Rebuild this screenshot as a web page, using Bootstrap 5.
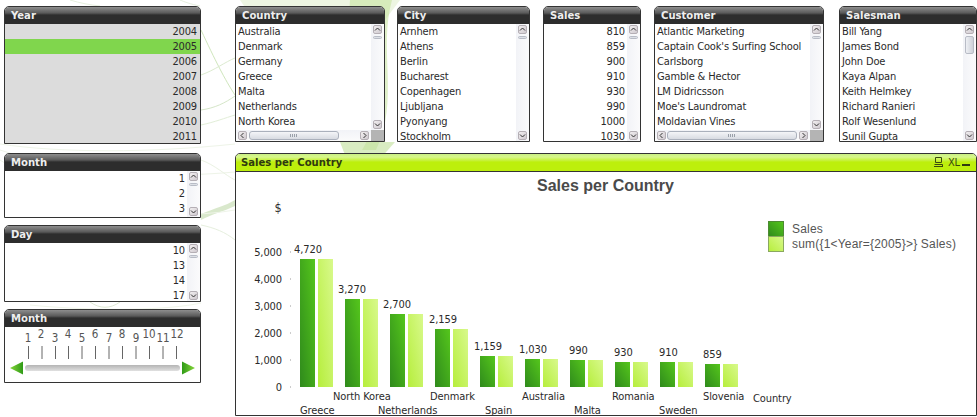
<!DOCTYPE html>
<html lang="en">
<head>
<meta charset="utf-8">
<title>Sales dashboard</title>
<link href="https://cdn.jsdelivr.net/npm/bootstrap@5.3.0/dist/css/bootstrap.min.css" rel="stylesheet">
<style>
html,body{margin:0;background:#fff;overflow:hidden}
body{width:977px;height:417px;font:11px/15px "DejaVu Sans Condensed","DejaVu Sans",sans-serif;letter-spacing:-.15px;color:#2a2a2a}
.sheet{width:977px;height:417px;padding:6px 0 0 4px;position:relative;overflow:hidden}
.swoosh{position:absolute;left:0;top:0;z-index:0}
.colleft{width:197px;position:relative;z-index:1}
.colright{width:742px;margin-left:34px;position:relative;z-index:1}
.win{border:1px solid #333;border-radius:5px 5px 0 0;background:#fff;overflow:hidden;flex:none}
.cap{height:17px;margin:0;font:bold 11.2px/18px "DejaVu Sans Condensed","DejaVu Sans",sans-serif;color:#eee;padding-left:6px;letter-spacing:0;
background:linear-gradient(#8e8e8e 0,#5a5a5a 6px,#444 7px,#2d2d2d 8px,#2d2d2d 100%)}
.cap-green{color:#2f3a10;padding-left:5px;background:linear-gradient(#c9ef84 0,#d7f78a 3px,#c3f02e 7px,#bdef0c 8px,#bdef0c 100%);border-bottom:1px solid #333;height:18px;display:flex;justify-content:space-between}
.capicons{display:block;margin-top:2px;font-weight:400}
.body-list{display:flex}
.rows{flex:1 1 auto;min-width:0;overflow:hidden}
.rowi{height:15px;white-space:nowrap;padding-left:2px}
.rowr{text-align:right;padding:0 2px 0 0}
.gray{background:#dcdcdc}
.gray .rowi{padding-right:3px}
.pick{background:#80d64d}
.vbar{width:13px;flex:none;background:linear-gradient(90deg,#f2f3f7,#fbfbfc);position:relative}
.btn-sb{position:absolute;width:9px;height:9px;background:linear-gradient(135deg,#f2eff0,#cfc9cf);border:1px solid #b5afb5;border-radius:2px;display:block}
.btn-sb svg{display:block}
.up{left:2px;top:1px}
.dn{left:2px;bottom:1px}
.thumb{position:absolute;left:2px;top:12px;width:9px;height:3px;border:1px solid #b8bcc6;border-radius:2px;background:#dde0e6}
.thumb-tall{height:18px;background:linear-gradient(90deg,#eef0f4,#cdd0d8)}
.hbar{height:11px;display:flex;background:linear-gradient(#f2f3f7,#fbfbfc);position:relative}
.hzone{flex:1;position:relative}
.corner{width:13px;background:#b4b4b4;flex:none}
.hl{left:2px;top:1px}
.hr{right:2px;top:1px}
.hthumb{position:absolute;left:13px;right:32px;top:1px;height:9px;border:1px solid #aab0bc;border-radius:3px;background:linear-gradient(#f4f5f8,#d8dbe2)}
.hthumb-wide{left:12px;right:13px}
.hthumb::after{content:"";position:absolute;left:50%;top:2px;margin-left:-4px;width:8px;height:3px;background:repeating-linear-gradient(90deg,#9aa0aa 0 1px,transparent 1px 2px)}
.h-year{height:138px}.h-m{height:65px}.h-d{height:77px}.h-s{height:74px}
.gap9{margin-bottom:9px}.gap7{margin-bottom:7px}
.toprow{height:136px;margin-bottom:11px}
.w150{width:150px}.w133{width:133px;margin-left:12px}.w98{width:98px;margin-left:13px}.w170{width:170px;margin-left:13px}.w138{width:138px;margin-left:15px}
.chartwin{width:742px;height:263px}
.blockfig{display:block}
.sl{font:11.5px "DejaVu Sans Condensed","DejaVu Sans",sans-serif;fill:#555;letter-spacing:0}
.axis{font:11px "DejaVu Sans Condensed","DejaVu Sans",sans-serif;fill:#2a2a2a;letter-spacing:-.1px}
.dollar{font:12.5px "DejaVu Sans Condensed","DejaVu Sans",sans-serif;fill:#2a2a2a}
.xltxt{font:400 11px "DejaVu Sans Condensed",sans-serif;fill:#3a4a10;letter-spacing:-.2px}
.ttl{font:bold 16px "Liberation Sans",Arial,sans-serif;fill:#4a4a4a;letter-spacing:0}
.leg{font:12px "Liberation Sans",Arial,sans-serif;fill:#555;letter-spacing:.2px}
</style>
</head>
<body>
<div class="sheet d-flex">
<svg class="swoosh" width="977" height="417" viewBox="0 0 977 417" fill="none" aria-hidden="true">
<path d="M240 0C262 35 300 60 385 20L400 0Z" fill="#dfeccb" opacity=".55"/>
<path d="M350 0C345 60 385 120 362 150L376 150C400 100 378 50 392 0Z" fill="#c4e29b" opacity=".55"/>
<path d="M340 142L395 142L372 168L350 168Z" fill="#bfe09a" opacity=".6"/>
<path d="M201 30C215 60 225 80 235 95" stroke="#cfe6bc"/>
<path d="M201 75C215 70 225 62 235 58" stroke="#dcebd0"/>
<path d="M201 110C215 108 225 103 235 96" stroke="#d5e6c8"/>
<path d="M201 125C215 122 225 118 235 115" stroke="#e2eed8"/>
<path d="M201 214C215 208 225 206 235 200L235 206C222 212 212 214 201 220Z" fill="#cfe2bf" opacity=".8"/>
<path d="M0 160C60 200 150 225 235 210" stroke="#eef4e8"/>
<path d="M0 150C60 170 150 180 235 172" stroke="#eef4e8"/>
<path d="M201 225C215 228 225 232 235 240" stroke="#e6efde"/>
<path d="M201 160C215 165 225 175 235 180" stroke="#eaf2e2"/>
<path d="M90 302C100 309 110 309 120 302" stroke="#dfe9d4"/>
<path d="M30 305C100 312 170 310 201 303" stroke="#f0f5e9"/>
<path d="M0 144C60 153 150 153 235 144" stroke="#eef4e8"/>
<path d="M70 0C80 3 90 5 100 6M180 0C185 2 190 4 200 6" stroke="#e6efde"/>
</svg>

<div class="colleft">
  <section class="win h-year gap9">
    <h2 class="cap">Year</h2>
    <div class="gray" style="height:120px">
      <div class="rowi rowr">2004</div>
      <div class="rowi rowr pick">2005</div>
      <div class="rowi rowr">2006</div>
      <div class="rowi rowr">2007</div>
      <div class="rowi rowr">2008</div>
      <div class="rowi rowr">2009</div>
      <div class="rowi rowr">2010</div>
      <div class="rowi rowr">2011</div>
    </div>
  </section>
  <section class="win h-m gap7">
    <h2 class="cap">Month</h2>
    <div class="body-list" style="height:46px">
      <div class="rows"><div class="rowi rowr">1</div><div class="rowi rowr">2</div><div class="rowi rowr">3</div></div>
      <div class="vbar"><span class="btn-sb up"><svg width="7" height="7"><path d="M1 4.500L3.500 2L6 4.500" stroke="#333" fill="none"/></svg></span><span class="thumb"></span><span class="btn-sb dn"><svg width="7" height="7"><path d="M1 2.500L3.500 5L6 2.500" stroke="#333" fill="none"/></svg></span></div>
    </div>
  </section>
  <section class="win h-d gap7">
    <h2 class="cap">Day</h2>
    <div class="body-list" style="height:58px">
      <div class="rows"><div class="rowi rowr">10</div><div class="rowi rowr">13</div><div class="rowi rowr">14</div><div class="rowi rowr">17</div></div>
      <div class="vbar"><span class="btn-sb up"><svg width="7" height="7"><path d="M1 4.500L3.500 2L6 4.500" stroke="#333" fill="none"/></svg></span><span class="thumb"></span><span class="btn-sb dn"><svg width="7" height="7"><path d="M1 2.500L3.500 5L6 2.500" stroke="#333" fill="none"/></svg></span></div>
    </div>
  </section>
  <section class="win h-s">
    <h2 class="cap">Month</h2>
    <svg class="blockfig" width="195" height="55" viewBox="0 0 195 55">
      <defs>
        <linearGradient id="trk" x1="0" y1="0" x2="0" y2="1"><stop offset="0" stop-color="#b4b4b4"/><stop offset="1" stop-color="#e0e0e0"/></linearGradient>
        <linearGradient id="arL" x1="0" y1="0" x2="1" y2="0"><stop offset="0" stop-color="#86d63a"/><stop offset="1" stop-color="#2f9a17"/></linearGradient>
        <linearGradient id="arR" x1="0" y1="0" x2="1" y2="0"><stop offset="0" stop-color="#2f9a17"/><stop offset="1" stop-color="#86d63a"/></linearGradient>
      </defs>
      <g class="sl" text-anchor="middle">
        <text x="23" y="15">1</text><text x="36" y="11">2</text><text x="50" y="15">3</text><text x="63" y="11">4</text><text x="77" y="15">5</text><text x="90" y="11">6</text><text x="104" y="15">7</text><text x="117" y="11">8</text><text x="131" y="15">9</text><text x="144" y="11">10</text><text x="158" y="15">11</text><text x="172" y="11">12</text>
      </g>
      <path d="M23.500 19v13M37 19v13M50.500 19v13M63.500 19v13M77 19v13M90.500 19v13M104 19v13M117.500 19v13M131 19v13M144.500 19v13M158 19v13M171.500 19v13" stroke="#666"/>
      <rect x="20" y="38" width="155" height="6" rx="3" fill="url(#trk)"/>
      <path d="M5 41L18 34.500V47.500Z" fill="url(#arL)"/>
      <path d="M190 41L177 34.500V47.500Z" fill="url(#arR)"/>
    </svg>
  </section>
</div>

<div class="colright">
  <div class="d-flex toprow">
    <section class="win w150">
      <h2 class="cap">Country</h2>
      <div class="body-list" style="height:106px">
        <div class="rows"><div class="rowi">Australia</div><div class="rowi">Denmark</div><div class="rowi">Germany</div><div class="rowi">Greece</div><div class="rowi">Malta</div><div class="rowi">Netherlands</div><div class="rowi">North Korea</div></div>
        <div class="vbar"><span class="btn-sb up"><svg width="7" height="7"><path d="M1 4.500L3.500 2L6 4.500" stroke="#333" fill="none"/></svg></span><span class="thumb"></span><span class="btn-sb dn"><svg width="7" height="7"><path d="M1 2.500L3.500 5L6 2.500" stroke="#333" fill="none"/></svg></span></div>
      </div>
      <div class="hbar"><div class="hzone"><span class="btn-sb hl"><svg width="7" height="7"><path d="M4.500 1L2 3.500L4.500 6" stroke="#333" fill="none"/></svg></span><span class="hthumb"></span><span class="btn-sb hr"><svg width="7" height="7"><path d="M2.500 1L5 3.500L2.500 6" stroke="#333" fill="none"/></svg></span></div><div class="corner"></div></div>
    </section>
    <section class="win w133">
      <h2 class="cap">City</h2>
      <div class="body-list" style="height:117px">
        <div class="rows"><div class="rowi">Arnhem</div><div class="rowi">Athens</div><div class="rowi">Berlin</div><div class="rowi">Bucharest</div><div class="rowi">Copenhagen</div><div class="rowi">Ljubljana</div><div class="rowi">Pyonyang</div><div class="rowi">Stockholm</div></div>
        <div class="vbar"><span class="btn-sb up"><svg width="7" height="7"><path d="M1 4.500L3.500 2L6 4.500" stroke="#333" fill="none"/></svg></span><span class="thumb"></span><span class="btn-sb dn"><svg width="7" height="7"><path d="M1 2.500L3.500 5L6 2.500" stroke="#333" fill="none"/></svg></span></div>
      </div>
    </section>
    <section class="win w98">
      <h2 class="cap">Sales</h2>
      <div class="body-list" style="height:117px">
        <div class="rows"><div class="rowi rowr">810</div><div class="rowi rowr">859</div><div class="rowi rowr">900</div><div class="rowi rowr">910</div><div class="rowi rowr">930</div><div class="rowi rowr">990</div><div class="rowi rowr">1000</div><div class="rowi rowr">1030</div></div>
        <div class="vbar"><span class="btn-sb up"><svg width="7" height="7"><path d="M1 4.500L3.500 2L6 4.500" stroke="#333" fill="none"/></svg></span><span class="thumb"></span><span class="btn-sb dn"><svg width="7" height="7"><path d="M1 2.500L3.500 5L6 2.500" stroke="#333" fill="none"/></svg></span></div>
      </div>
    </section>
    <section class="win w170">
      <h2 class="cap">Customer</h2>
      <div class="body-list" style="height:106px">
        <div class="rows"><div class="rowi">Atlantic Marketing</div><div class="rowi">Captain Cook's Surfing School</div><div class="rowi">Carlsborg</div><div class="rowi">Gamble &amp; Hector</div><div class="rowi">LM Didricsson</div><div class="rowi">Moe's Laundromat</div><div class="rowi">Moldavian Vines</div></div>
        <div class="vbar"><span class="btn-sb up"><svg width="7" height="7"><path d="M1 4.500L3.500 2L6 4.500" stroke="#333" fill="none"/></svg></span><span class="thumb"></span><span class="btn-sb dn"><svg width="7" height="7"><path d="M1 2.500L3.500 5L6 2.500" stroke="#333" fill="none"/></svg></span></div>
      </div>
      <div class="hbar"><div class="hzone"><span class="btn-sb hl"><svg width="7" height="7"><path d="M4.500 1L2 3.500L4.500 6" stroke="#333" fill="none"/></svg></span><span class="hthumb hthumb-wide"></span><span class="btn-sb hr"><svg width="7" height="7"><path d="M2.500 1L5 3.500L2.500 6" stroke="#333" fill="none"/></svg></span></div><div class="corner"></div></div>
    </section>
    <section class="win w138">
      <h2 class="cap">Salesman</h2>
      <div class="body-list" style="height:117px">
        <div class="rows"><div class="rowi">Bill Yang</div><div class="rowi">James Bond</div><div class="rowi">John Doe</div><div class="rowi">Kaya Alpan</div><div class="rowi">Keith Helmkey</div><div class="rowi">Richard Ranieri</div><div class="rowi">Rolf Wesenlund</div><div class="rowi">Sunil Gupta</div></div>
        <div class="vbar"><span class="btn-sb up"><svg width="7" height="7"><path d="M1 4.500L3.500 2L6 4.500" stroke="#333" fill="none"/></svg></span><span class="thumb thumb-tall"></span><span class="btn-sb dn"><svg width="7" height="7"><path d="M1 2.500L3.500 5L6 2.500" stroke="#333" fill="none"/></svg></span></div>
      </div>
    </section>
  </div>

  <section class="win chartwin">
    <h2 class="cap cap-green"><span>Sales per Country</span>
      <svg class="capicons" width="42" height="13" viewBox="0 0 42 13"><path d="M1.500 1.500h6v5h-6zM0 10.500h9M.5 8.500h8v2" stroke="#3a4a10" fill="none"/><text class="xltxt" x="14" y="10">XL</text><rect x="28" y="8" width="8" height="2" fill="#2f3a10"/></svg>
    </h2>
    <!-- svg origin: x=236, y=172 in page coordinates -->
    <svg class="blockfig" width="740" height="244" viewBox="236 172 740 244">
      <defs>
        <linearGradient id="dk" x1="0" y1="1" x2="1" y2="0"><stop offset="0" stop-color="#2f8a1c"/><stop offset="1" stop-color="#55c61c"/></linearGradient>
        <linearGradient id="lt" x1="0" y1="1" x2="1" y2="0"><stop offset="0" stop-color="#b6ee3c"/><stop offset="1" stop-color="#d8f98c"/></linearGradient>
      </defs>
      <text class="ttl" x="605.500" y="191" text-anchor="middle">Sales per Country</text>
      <text class="dollar" x="278" y="212" text-anchor="middle">$</text>
      <g class="axis" text-anchor="end">
        <text x="282" y="256">5,000</text><text x="282" y="283">4,000</text><text x="282" y="310">3,000</text><text x="282" y="337">2,000</text><text x="282" y="364">1,000</text><text x="282" y="391">0</text>
      </g>
      <path d="M290 252h1M290 279h1M290 306h1M290 333h1M290 360h1M290 387h1" stroke="#999"/>
      <g fill="url(#dk)">
        <rect x="300" y="259" width="15" height="128"/><rect x="345" y="299" width="15" height="88"/><rect x="390" y="314" width="15" height="73"/><rect x="435" y="329" width="15" height="58"/><rect x="480" y="356" width="15" height="31"/><rect x="525" y="359" width="15" height="28"/><rect x="570" y="360" width="15" height="27"/><rect x="615" y="362" width="15" height="25"/><rect x="660" y="362" width="15" height="25"/><rect x="705" y="364" width="15" height="23"/>
      </g>
      <g fill="url(#lt)">
        <rect x="318" y="259" width="15" height="128"/><rect x="363" y="299" width="15" height="88"/><rect x="408" y="314" width="15" height="73"/><rect x="453" y="329" width="15" height="58"/><rect x="498" y="356" width="15" height="31"/><rect x="543" y="359" width="15" height="28"/><rect x="588" y="360" width="15" height="27"/><rect x="633" y="362" width="15" height="25"/><rect x="678" y="362" width="15" height="25"/><rect x="723" y="364" width="15" height="23"/>
      </g>
      <g class="axis">
        <text x="294" y="253">4,720</text><text x="338" y="293">3,270</text><text x="383" y="308">2,700</text><text x="429" y="323">2,159</text><text x="474" y="350">1,159</text><text x="519" y="353">1,030</text><text x="569" y="354">990</text><text x="614" y="356">930</text><text x="659" y="356">910</text><text x="703" y="358">859</text>
      </g>
      <g class="axis">
        <text x="300" y="414">Greece</text><text x="333" y="400">North Korea</text><text x="378" y="414">Netherlands</text><text x="430" y="400">Denmark</text><text x="485" y="414">Spain</text><text x="522" y="400">Australia</text><text x="574" y="414">Malta</text><text x="612" y="400">Romania</text><text x="659" y="414">Sweden</text><text x="703" y="400">Slovenia</text><text x="753" y="402">Country</text>
      </g>
      <rect x="768.500" y="221.500" width="15" height="15" fill="url(#dk)" stroke="#4d8a33"/>
      <rect x="768.500" y="236.500" width="15" height="15" fill="url(#lt)" stroke="#8aa860"/>
      <text class="leg" x="792" y="233">Sales</text>
      <text class="leg" x="792" y="248">sum({1&lt;Year={2005}&gt;} Sales)</text>
    </svg>
  </section>
</div>
</div>
</body>
</html>
